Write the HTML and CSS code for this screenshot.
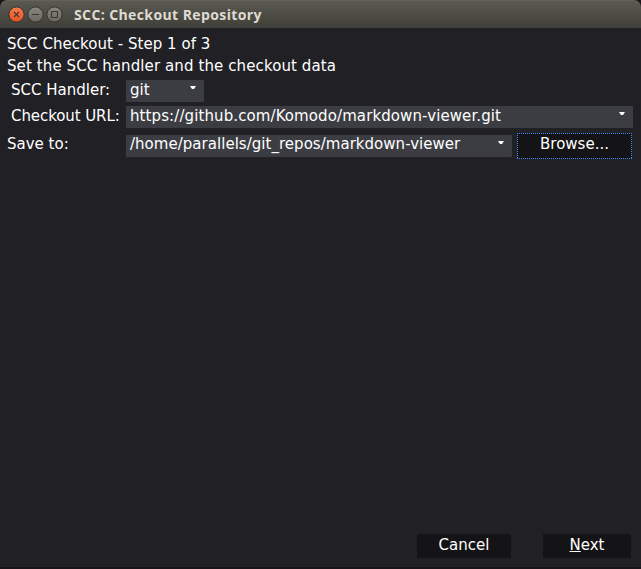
FILE: index.html
```html
<!DOCTYPE html>
<html lang="en">
<head>
<meta charset="utf-8">
<title>SCC: Checkout Repository</title>
<link rel="stylesheet" href="styles.css">
</head>
<body>
<div class="window">
  <header class="titlebar">
    <svg class="controls" width="56" height="18" viewBox="0 0 56 18">
      <defs>
        <linearGradient id="close" x1="0" y1="0" x2="0" y2="1"><stop offset="0" stop-color="#f8794f"/><stop offset="1" stop-color="#ea5420"/></linearGradient>
        <linearGradient id="plain" x1="0" y1="0" x2="0" y2="1"><stop offset="0" stop-color="#89877e"/><stop offset="1" stop-color="#69675f"/></linearGradient>
      </defs>
      <g stroke="#35332e">
        <circle cx="8.5" cy="7.5" r="7.6" fill="url(#close)"/>
        <circle cx="27.5" cy="7.5" r="7.6" fill="url(#plain)"/>
        <circle cx="46.5" cy="7.5" r="7.6" fill="url(#plain)"/>
      </g>
      <g stroke="#3b3933" stroke-width="1.1" fill="none">
        <path d="M6 5l5 5M11 5l-5 5"/>
        <path d="M24 7.5h7"/>
        <path d="M43.5 4.5h6v6h-6z"/>
      </g>
    </svg>
    <h1 class="title">SCC: Checkout Repository</h1>
  </header>
  <main class="content">
    <p class="line">SCC Checkout - Step 1 of 3</p>
    <p class="line intro">Set the SCC handler and the checkout data</p>
    <div class="form">
      <div class="row">
        <span class="label indent">SCC Handler:</span>
        <div class="field handler"><span>git</span><svg class="arrow" width="6" height="4" viewBox="0 0 6 4"><path d="M0 0h6L4 3H2z"/></svg></div>
      </div>
      <div class="row url-row">
        <span class="label indent tight">Checkout URL:</span>
        <div class="field url"><span>https://github.com/Komodo/markdown-viewer.git</span><svg class="arrow" width="6" height="4" viewBox="0 0 6 4"><path d="M0 0h6L4 3H2z"/></svg></div>
      </div>
      <div class="row save-row">
        <span class="label">Save to:</span>
        <div class="field path"><span>/home/parallels/git_repos/markdown-viewer</span><svg class="arrow" width="6" height="4" viewBox="0 0 6 4"><path d="M0 0h6L4 3H2z"/></svg></div>
        <button class="button browse">Browse...</button>
      </div>
    </div>
  </main>
  <footer class="actions">
    <button class="button cancel">Cancel</button>
    <button class="button next"><span class="key">N</span>ext</button>
  </footer>
</div>
</body>
</html>
```
FILE: styles.css
```css
* { box-sizing: border-box; }
body { margin: 0; background: #17151b; }
.window {
  width: 641px; height: 569px;
  display: flex; flex-direction: column;
  background: #212025;
  color: #fff;
  font: 15px/22px "DejaVu Sans", sans-serif;
  border-bottom: 2px solid #17151a;
  border-radius: 7px 7px 0 0;
  overflow: hidden;
}
.titlebar {
  height: 28px; flex: none;
  display: flex; align-items: flex-start;
  padding: 6px 0 0 8px;
  background: linear-gradient(#5b5a51, #3f3e38);
  border-top: 1px solid #656359;
}
.controls { flex: none; margin-right: 10px; overflow: visible; }
.title {
  margin: -1px 0 0;
  font: bold 14px/18px "Open Sans", sans-serif;
  letter-spacing: 0.4px;
  color: #dfdbd2;
  white-space: nowrap;
}
.content { flex: 1; padding: 5px 0 0 7px; }
.line { margin: 0; white-space: nowrap; letter-spacing: 0.04px; }
.intro { letter-spacing: 0.1px; }
.form { padding-top: 3px; }
.row { display: flex; height: 22px; white-space: nowrap; line-height: 21px; }
.url-row { margin-top: 4px; }
.save-row { margin-top: 7px; line-height: 19px; }
.label { width: 119px; flex: none; }
.indent { padding-left: 4px; }
.tight { letter-spacing: -0.08px; }
.field {
  height: 22px;
  display: flex; justify-content: space-between;
  padding: 0 8px 0 4px;
  background: #3c3d42;
  border-radius: 1px;
}
.handler { width: 78px; }
.url { width: 507px; letter-spacing: 0.1px; }
.path { width: 386px; letter-spacing: 0.03px; }
.arrow { flex: none; margin-top: 6px; fill: #fff; }
.button {
  height: 24px;
  padding: 0 0 2px;
  border: 0; border-radius: 1px;
  background: #141315;
  color: #fff;
  font: inherit;
}
.browse {
  width: 115px; height: 26px;
  margin: -2px 0 0 5px;
  padding: 1px 1px 5px;
  line-height: 18px;
  border: 0;
  border-radius: 0;
  background:
    repeating-linear-gradient(90deg, #3f8cff 0 1px, #141315 1px 2px) top / 100% 1px no-repeat,
    repeating-linear-gradient(90deg, #3f8cff 0 1px, #141315 1px 2px) bottom / 100% 1px no-repeat,
    repeating-linear-gradient(#3f8cff 0 1px, #141315 1px 2px) left / 1px 100% no-repeat,
    repeating-linear-gradient(#3f8cff 0 1px, #141315 1px 2px) right / 1px 100% no-repeat,
    #141315;
}
.actions {
  display: flex; justify-content: flex-end; gap: 32px;
  padding: 0 10px 9px 0;
}
.cancel { width: 94px; }
.next { width: 88px; }
.key { text-decoration: underline; }
```
